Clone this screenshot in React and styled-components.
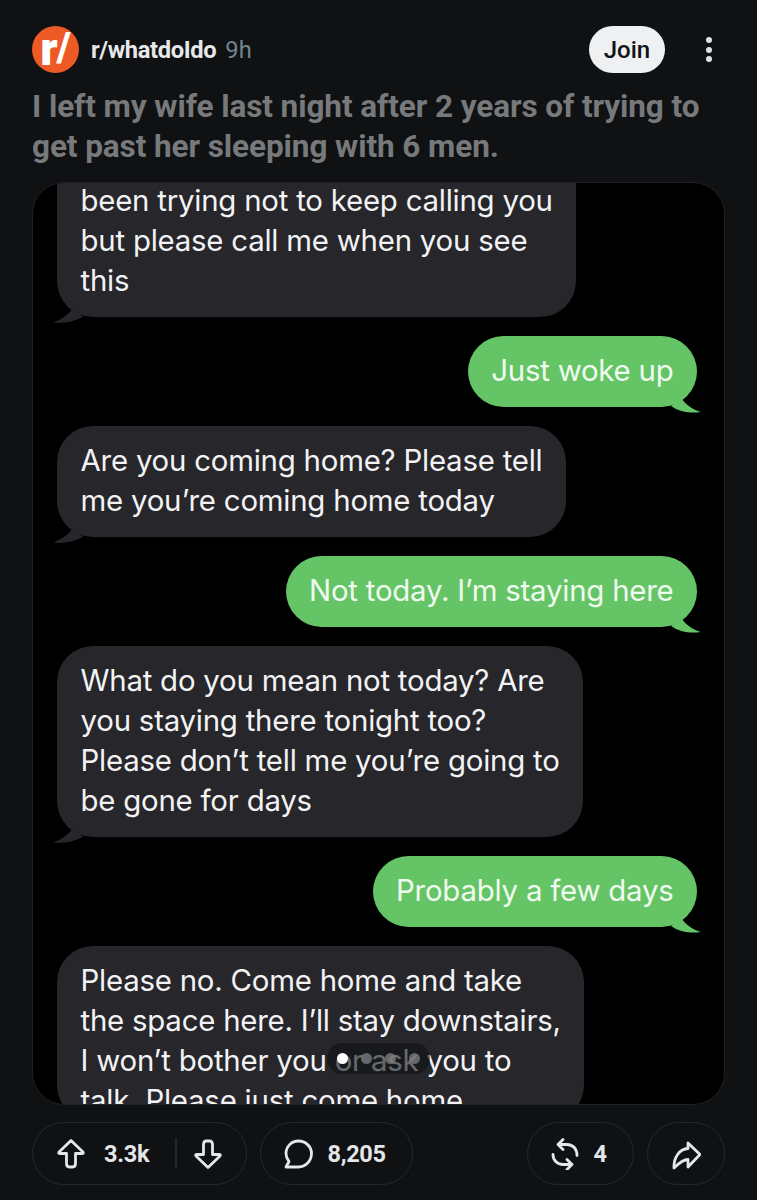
import React from 'react';
import styled, { createGlobalStyle } from 'styled-components';

const GlobalStyle = createGlobalStyle`
  html, body {
    margin: 0;
    padding: 0;
    background: #0f1113;
    overflow: hidden;
  }
`;

const Page = styled.div`
  width: 757px;
  height: 1200px;
  box-sizing: border-box;
  padding: 26px 32px 0;
  background: #0f1113;
  font-family: Roboto, "Liberation Sans", sans-serif;
  overflow: hidden;
`;

const Header = styled.div`
  display: flex;
  align-items: center;
  height: 47px;
`;

const Logo = styled.div`
  width: 47px;
  height: 47px;
  border-radius: 50%;
  background: #ee5a26;
  color: #fff;
  display: flex;
  align-items: center;
  justify-content: center;
  font-size: 46px;
  font-weight: 900;
  line-height: 47px;

  span {
    font-size: 40px;
    margin-left: -1px;
    transform: translateY(-2px);
  }
`;

const Community = styled.span`
  margin-left: 12px;
  font-size: 23.7px;
  font-weight: 700;
  letter-spacing: -0.35px;
  color: #e6e8ea;
`;

const Age = styled.span`
  margin-left: 9px;
  font-size: 23.7px;
  font-weight: 400;
  color: #74858d;
`;

const JoinButton = styled.div`
  margin-left: auto;
  width: 76px;
  height: 47px;
  border-radius: 24px;
  background: #eef0f2;
  color: #111316;
  display: flex;
  align-items: center;
  justify-content: center;
  font-size: 24px;
  font-weight: 500;
`;

const MoreDots = styled.div`
  margin-left: 41px;
  margin-right: 13px;
  display: flex;
  flex-direction: column;
  gap: 3.5px;

  span {
    width: 6px;
    height: 6px;
    border-radius: 50%;
    background: #dfe1e3;
  }
`;

const Title = styled.h1`
  margin: 14px 0 15px;
  font-size: 31.5px;
  line-height: 40px;
  font-weight: 700;
  letter-spacing: -0.08px;
  color: #77797b;
  white-space: nowrap;
`;

const Media = styled.div`
  position: relative;
  height: 923px;
  box-sizing: border-box;
  border: 1.5px solid #1e2023;
  border-radius: 32px;
  background: #000;
  overflow: hidden;
  padding: 0 27px 0 24px;
  display: flex;
  flex-direction: column;
  gap: 19px;
`;

const Bubble = styled.div`
  position: relative;
  flex: none;
  align-self: ${(p) => (p.$sent ? 'flex-end' : 'flex-start')};
  margin-top: ${(p) => (p.$cropped ? '-2px' : '0')};
  padding: ${(p) => (p.$cropped ? '0' : '15px')} 23.5px ${(p) => (p.$open ? '0' : '16px')};
  border-radius: ${(p) => (p.$cropped ? '0 0 36px 36px' : '36px')};
  background: ${(p) => (p.$sent ? '#65c466' : '#26262b')};
  color: ${(p) => (p.$sent ? '#f0fbef' : '#f3f3f5')};
  font-family: Inter, "Liberation Sans", sans-serif;
  font-size: 29.4px;
  font-weight: 400;
  line-height: 40px;
  letter-spacing: -0.22px;
  white-space: nowrap;
`;

const Tail = styled.svg`
  position: absolute;
  bottom: -6px;
  ${(p) => (p.$sent ? 'right: -4px;' : 'left: -4px;')}
  width: 30px;
  height: 22px;
`;

const Pager = styled.div`
  position: absolute;
  left: 293.5px;
  top: 859.5px;
  width: 103px;
  height: 31px;
  border-radius: 16px;
  background: rgba(15, 17, 19, 0.62);
  display: flex;
  align-items: center;
  justify-content: center;
  gap: 13px;
`;

const Dot = styled.span`
  width: 11px;
  height: 11px;
  border-radius: 50%;
  background: ${(p) => (p.$active ? '#fff' : 'rgba(130, 130, 130, 0.75)')};
`;

const Actions = styled.div`
  display: flex;
  align-items: center;
  gap: 13px;
  margin-top: 17px;
  height: 63px;
`;

const Pill = styled.div`
  box-sizing: border-box;
  width: ${(p) => p.$width}px;
  height: 63px;
  padding-left: ${(p) => p.$pad || 0}px;
  border: 1.5px solid #26282b;
  border-radius: 32px;
  display: flex;
  align-items: center;
  justify-content: ${(p) => (p.$pad ? 'flex-start' : 'center')};
  gap: ${(p) => p.$gap || 0}px;
  color: #e4e6e8;
  font-size: 23.5px;
  font-weight: 700;
  letter-spacing: -0.3px;
  ${(p) => p.$push && 'margin-left: auto;'}
`;

const VoteDivider = styled.span`
  width: 1.5px;
  height: 31px;
  background: #26282b;
  margin: 0 -1.5px 0 8px;
`;

const Icon = styled.svg`
  width: 30px;
  height: 32px;
  fill: none;
  stroke: #e4e6e8;
  stroke-width: 2.8;
  stroke-linejoin: round;
  stroke-linecap: round;
  flex: none;
`;

const messages = [
  { lines: ['been trying not to keep calling you', 'but please call me when you see', 'this'], cropped: true },
  { lines: ['Just woke up'], sent: true },
  { lines: ['Are you coming home? Please tell', 'me you’re coming home today'] },
  { lines: ['Not today. I’m staying here'], sent: true },
  { lines: ['What do you mean not today? Are', 'you staying there tonight too?', 'Please don’t tell me you’re going to', 'be gone for days'] },
  { lines: ['Probably a few days'], sent: true },
  { lines: ['Please no. Come home and take', 'the space here. I’ll stay downstairs,', 'I won’t bother you or ask you to', 'talk. Please just come home'], open: true },
];

function App() {
  return (
    <Page>
      <GlobalStyle />
      <Header>
        <Logo>r<span>/</span></Logo>
        <Community>r/whatdoIdo</Community>
        <Age>9h</Age>
        <JoinButton>Join</JoinButton>
        <MoreDots><span /><span /><span /></MoreDots>
      </Header>
      <Title>
        I left my wife last night after 2 years of trying to<br />
        get past her sleeping with 6 men.
      </Title>
      <Media>
        {messages.map((m) => (
          <Bubble key={m.lines[0]} $sent={m.sent} $cropped={m.cropped} $open={m.open}>
            {m.lines.map((line) => <div key={line}>{line}</div>)}
            {!m.open && (
              <Tail viewBox="0 0 30 22" $sent={m.sent}>
                {m.sent
                  ? <path d="M11 8 C14 13 21 18 29.5 21 C20 22.5 8 21 0 15 Z" fill="#65c466" />
                  : <path d="M20 6 C17 13 9 18 0.5 21.5 C10 23 20 21 30 16 Z" fill="#26262b" />}
              </Tail>
            )}
          </Bubble>
        ))}
        <Pager>
          <Dot $active /><Dot /><Dot /><Dot />
        </Pager>
      </Media>
      <Actions>
        <Pill $width={215} $pad={23} $gap={18}>
          <Icon viewBox="0 0 30 32">
            <path d="M15 2.5 L27 14 Q28 15.5 26 15.5 H19.5 V25.5 Q19.5 29 16.5 29 H13.5 Q10.5 29 10.5 25.5 V15.5 H4 Q2 15.5 3 14 Z" />
          </Icon>
          <span>3.3k</span>
          <VoteDivider />
          <Icon viewBox="0 0 30 32">
            <path d="M15 29.5 L27 18 Q28 16.5 26 16.5 H19.5 V6.5 Q19.5 3 16.5 3 H13.5 Q10.5 3 10.5 6.5 V16.5 H4 Q2 16.5 3 18 Z" />
          </Icon>
        </Pill>
        <Pill $width={153} $pad={21.5} $gap={15}>
          <Icon viewBox="0 0 30 32">
            <path d="M3 29 H15.5 C22.5 29 28.5 23 28.5 15.5 C28.5 8.5 22.5 3 15.5 3 C8.5 3 3 8.5 3 15.5 C3 18.5 4.2 21.3 6 23.5 Z" />
          </Icon>
          <span>8,205</span>
        </Pill>
        <Pill $width={107} $pad={21.5} $gap={14} $push>
          <Icon viewBox="0 0 30 32">
            <path d="M13 1.5 L8 6.5 L13 11.5 M8 6.5 H17 C23 6.5 27 11 27 17.5" />
            <path d="M3 16.5 C3 22 7 26.5 13 26.5 H22 M17 21.5 L22 26.5 L17 31.5" />
          </Icon>
          <span>4</span>
        </Pill>
        <Pill $width={78}>
          <Icon viewBox="0 0 30 32">
            <path d="M17 5 L29 16.5 L17 29 V21.5 C12 21.5 8 25 3 30 C2.5 20 8 11 17 10.5 Z" />
          </Icon>
        </Pill>
      </Actions>
    </Page>
  );
}

export default App;
